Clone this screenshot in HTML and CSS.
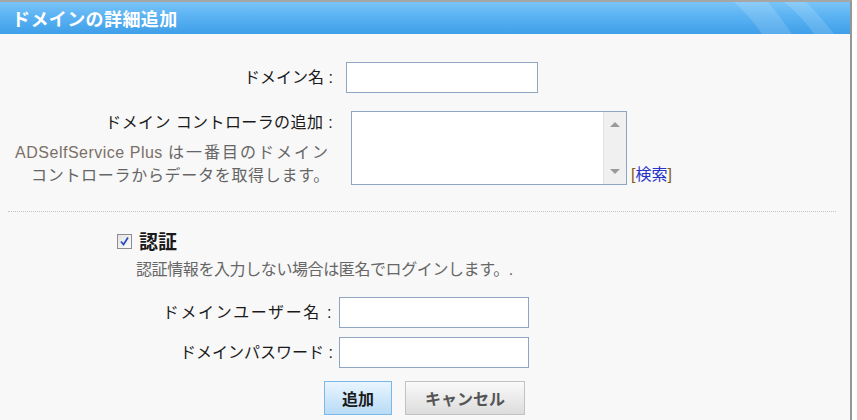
FILE: index.html
```html
<!DOCTYPE html>
<html lang="ja">
<head>
    <meta charset="UTF-8">
    <meta name="viewport" content="width=device-width, initial-scale=1.0">
    <title>ドメインの詳細追加</title>
    <link rel="stylesheet" href="styles.css">
</head>
<body>
    <div class="window">
        <div class="titlebar">
            <span class="title">ドメインの詳細追加</span>
            <svg class="gloss" width="110" height="32" viewBox="0 0 110 32">
                <path d="M0 0 L34 0 Q46 14 58 32 L28 32 Q16 14 0 0 Z" fill="#ffffff" fill-opacity="0.14"/>
                <path d="M50 0 L72 0 Q86 14 100 32 L80 32 Q68 14 50 0 Z" fill="#ffffff" fill-opacity="0.14"/>
            </svg>
        </div>

        <div class="content">
            <div class="row row-name">
                <label class="row-label" for="domainName">ドメイン名 :</label>
                <input type="text" id="domainName" class="field field-name">
            </div>

            <div class="row row-dc">
                <div class="row-label">
                    <label class="dc-label">ドメイン コントローラの追加 :</label>
                    <p class="hint"><span class="product">ADSelfService Plus</span> <span class="hint-wide">は一番目のドメイン</span><br>コントローラからデータを取得します。</p>
                </div>
                <div class="dc-list">
                    <div class="dc-text"></div>
                    <div class="dc-scroll">
                        <span class="arrow arrow-up"></span>
                        <span class="arrow arrow-down"></span>
                    </div>
                </div>
                <span class="search">[<a href="#">検索</a>]</span>
            </div>

            <hr class="divider">

            <div class="auth">
                <div class="auth-head">
                    <span class="checkbox">
                        <svg width="11" height="11" viewBox="0 0 11 11">
                            <path d="M2 5.5 L4.5 8.5 L9 1.5" fill="none" stroke="#2a4fc4" stroke-width="1.8"/>
                        </svg>
                    </span>
                    <span class="auth-title">認証</span>
                </div>
                <p class="auth-hint">認証情報を入力しない場合は匿名でログインします。.</p>
            </div>

            <div class="row row-cred">
                <label class="row-label label-user" for="userName">ドメインユーザー名 :</label>
                <input type="text" id="userName" class="field field-cred">
            </div>
            <div class="row row-cred row-pass">
                <label class="row-label" for="password">ドメインパスワード :</label>
                <input type="password" id="password" class="field field-cred">
            </div>

            <div class="actions">
                <button class="btn btn-primary">追加</button>
                <button class="btn btn-cancel">キャンセル</button>
            </div>
        </div>
    </div>
</body>
</html>
```

FILE: styles.css
```css
body {
    margin: 0;
    background: #fff;
    font-family: "Liberation Sans", "Noto Sans CJK JP", sans-serif;
    font-size: 16px;
    color: #1a1a1a;
}
.window {
    width: 850px;
    height: 418px;
    background: #f8f8f8;
    border-top: 2px solid #a6a6a6;
    border-right: 2px solid #979797;
}
.titlebar {
    position: relative;
    height: 32px;
    background: linear-gradient(to bottom, #7ac4f7 0%, #5db4f3 40%, #3f9fe9 100%);
    display: flex;
    align-items: center;
    overflow: hidden;
}
.title {
    padding-left: 12px;
    color: #fff;
    font-weight: bold;
    font-size: 18px;
    letter-spacing: 0.4px;
    font-family: "Noto Sans CJK JP", sans-serif;
}
.gloss {
    position: absolute;
    right: 6px;
    top: 0;
}
.row {
    display: flex;
}
.row-label {
    width: 333px;
    flex-shrink: 0;
    text-align: right;
    line-height: 24px;
}
.row-name {
    margin-top: 28px;
    align-items: center;
}
.field {
    height: 31px;
    box-sizing: border-box;
    border: 1px solid #8fa6c2;
    background: #fff;
    padding: 2px 4px;
    font-size: 14px;
}
.field-name {
    width: 192px;
    margin-left: 13px;
}
.row-dc {
    margin-top: 18px;
}
.dc-label {
    display: block;
    letter-spacing: 0.4px;
}
.hint {
    margin: 6px 3px 0 0;
    line-height: 23px;
    color: #666;
    letter-spacing: 0.7px;
}
.product {
    color: #7a7068;
    letter-spacing: 0.5px;
}
.hint-wide {
    letter-spacing: 2px;
}
.dc-list {
    display: flex;
    width: 276px;
    height: 74px;
    box-sizing: border-box;
    margin-left: 18px;
    border: 1px solid #8fa6c2;
    background: #fff;
}
.dc-text {
    flex: 1;
}
.dc-scroll {
    width: 22px;
    background: #f0f0f0;
    border-left: 1px solid #e2e2e2;
    display: flex;
    flex-direction: column;
    justify-content: space-between;
    align-items: center;
    padding: 10px 0;
}
.arrow {
    width: 0;
    height: 0;
    border-left: 5px solid transparent;
    border-right: 5px solid transparent;
}
.arrow-up {
    border-bottom: 5px solid #9a9a9a;
}
.arrow-down {
    border-top: 5px solid #9a9a9a;
}
.search {
    align-self: flex-end;
    margin-left: 4px;
    line-height: 24px;
    color: #8a5a10;
}
.search a {
    color: #2633c8;
    text-decoration: none;
}
.divider {
    margin: 24px 14px 0 8px;
    border: none;
    border-top: 1px dotted #c4c4c4;
    height: 0;
}
.auth {
    padding-left: 117px;
}
.auth-head {
    margin-top: 19px;
    display: flex;
    align-items: center;
    line-height: 20px;
}
.checkbox {
    width: 15px;
    height: 15px;
    box-sizing: border-box;
    border: 1px solid #8d8d8d;
    background: linear-gradient(to bottom right, #e4e4e4, #fbfbfb);
    display: flex;
    align-items: center;
    justify-content: center;
}
.auth-title {
    margin-left: 7px;
    font-weight: bold;
    font-size: 19px;
    font-family: "Noto Sans CJK JP", sans-serif;
}
.auth-hint {
    margin: 8px 0 0 19px;
    line-height: 22px;
    color: #666;
    letter-spacing: -0.4px;
}
.row-cred {
    margin-top: 16px;
    align-items: center;
}
.row-pass {
    margin-top: 9px;
}
.label-user {
    letter-spacing: 1.6px;
}
.field-cred {
    width: 190px;
    margin-left: 6px;
}
.actions {
    margin-top: 13px;
    padding-left: 324px;
    display: flex;
    gap: 13px;
}
.btn {
    height: 34px;
    font-family: "Noto Sans CJK JP", sans-serif;
    font-size: 16px;
    font-weight: bold;
    padding: 0;
    cursor: pointer;
}
.btn-primary {
    width: 68px;
    border: 1px solid #7ab8ea;
    background: linear-gradient(to bottom, #eaf5fe, #cbe5f9 60%, #b9dcf6);
    color: #1a1a1a;
}
.btn-cancel {
    width: 120px;
    border: 1px solid #c2c2c2;
    background: linear-gradient(to bottom, #fafafa, #e8e8e8 60%, #dcdcdc);
    color: #555;
}
```
